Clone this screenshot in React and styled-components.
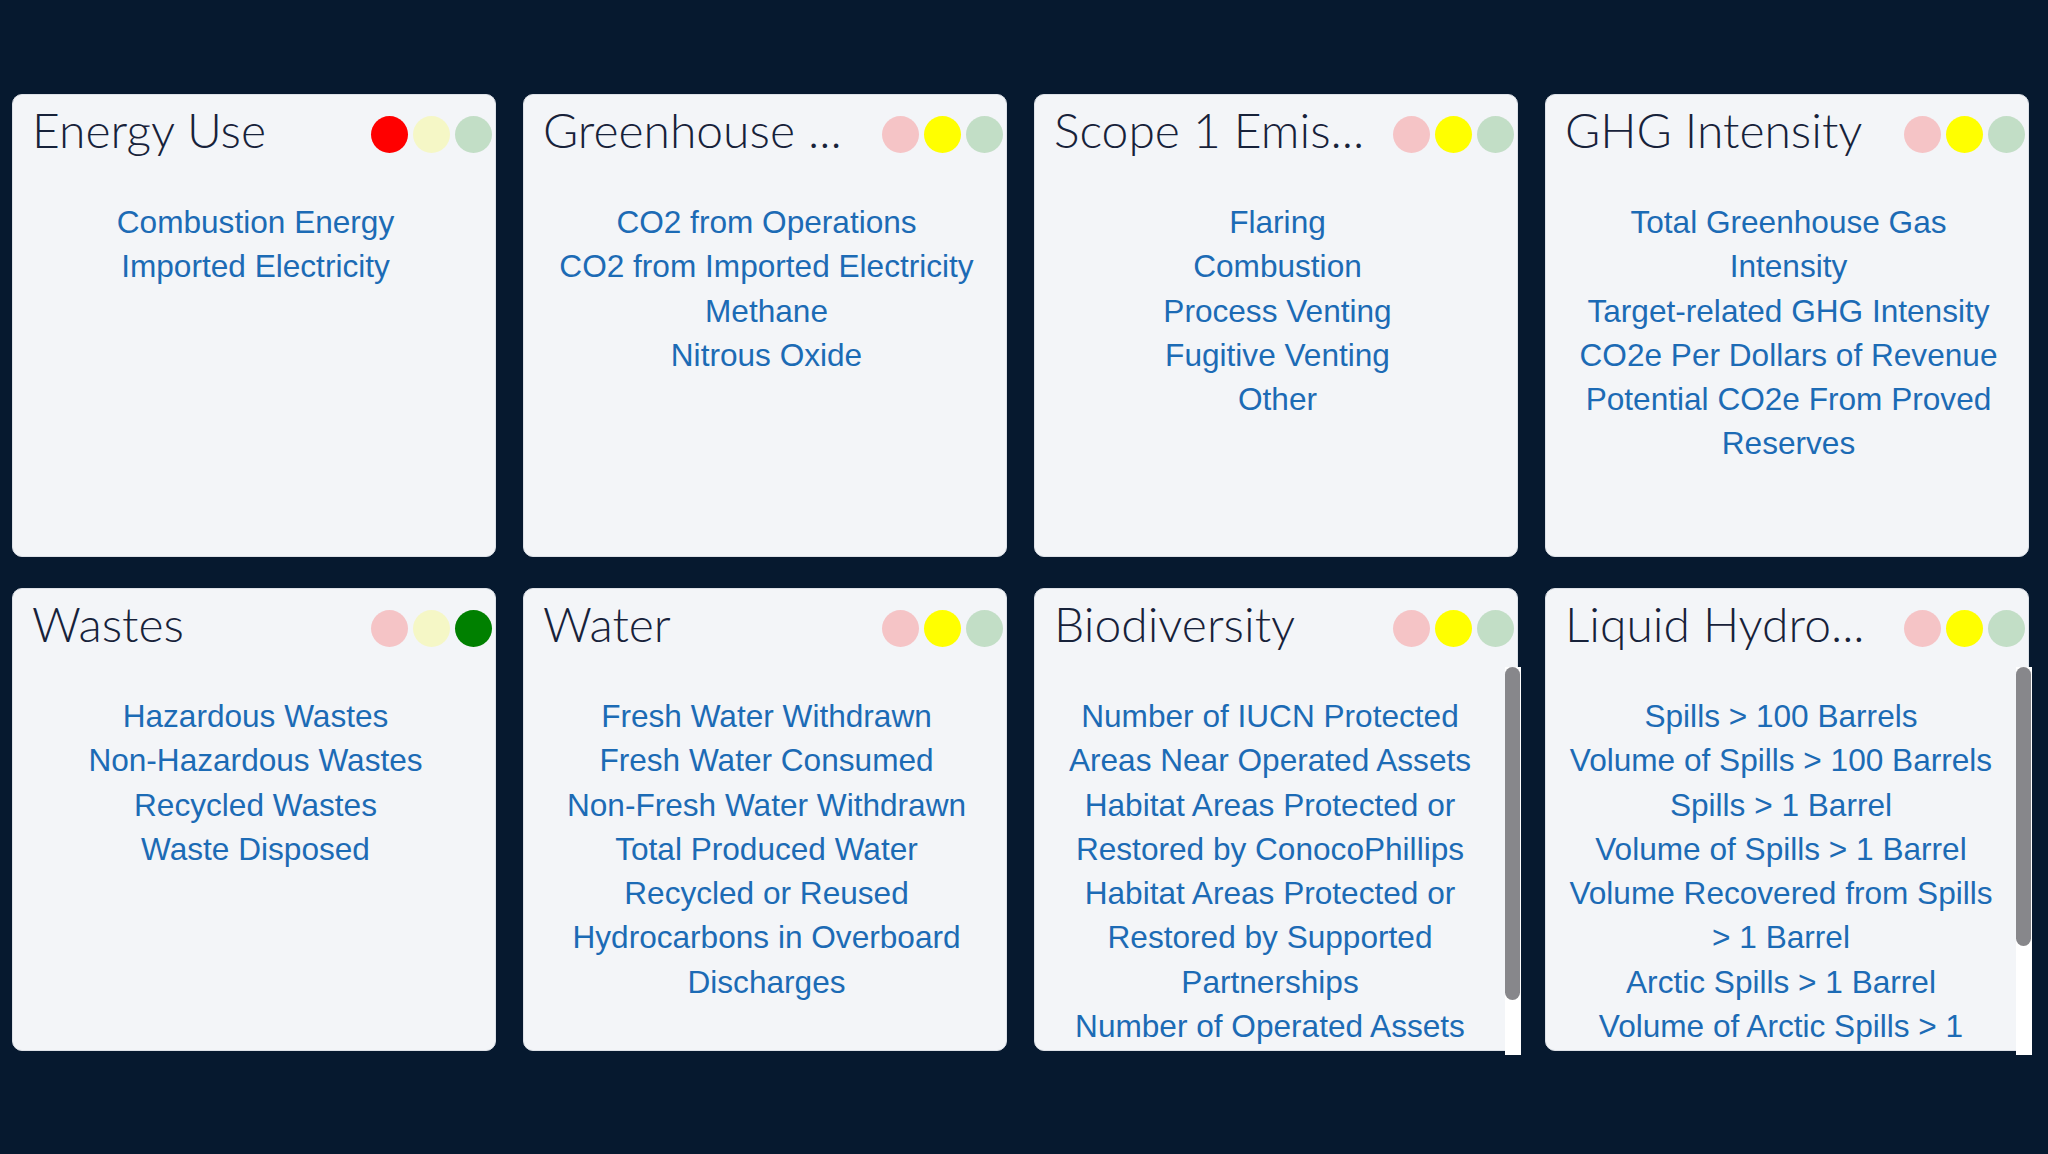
import React, { useLayoutEffect, useRef, useState } from 'react';
import styled, { createGlobalStyle } from 'styled-components';

const LIGHT = {
  red: '#ff0000',
  yellow: '#ffff00',
  green: '#008000',
};

const cards = [
  {
    title: 'Energy Use',
    status: 'red',
    items: ['Combustion Energy', 'Imported Electricity'],
  },
  {
    title: 'Greenhouse ...',
    status: 'yellow',
    items: [
      'CO2 from Operations',
      'CO2 from Imported Electricity',
      'Methane',
      'Nitrous Oxide',
    ],
  },
  {
    title: 'Scope 1 Emis...',
    status: 'yellow',
    items: ['Flaring', 'Combustion', 'Process Venting', 'Fugitive Venting', 'Other'],
  },
  {
    title: 'GHG Intensity',
    status: 'yellow',
    items: [
      'Total Greenhouse Gas Intensity',
      'Target-related GHG Intensity',
      'CO2e Per Dollars of Revenue',
      'Potential CO2e From Proved Reserves',
    ],
  },
  {
    title: 'Wastes',
    status: 'green',
    items: [
      'Hazardous Wastes',
      'Non-Hazardous Wastes',
      'Recycled Wastes',
      'Waste Disposed',
    ],
  },
  {
    title: 'Water',
    status: 'yellow',
    items: [
      'Fresh Water Withdrawn',
      'Fresh Water Consumed',
      'Non-Fresh Water Withdrawn',
      'Total Produced Water Recycled or Reused',
      'Hydrocarbons in Overboard Discharges',
    ],
  },
  {
    title: 'Biodiversity',
    status: 'yellow',
    items: [
      'Number of IUCN Protected Areas Near Operated Assets',
      'Habitat Areas Protected or Restored by ConocoPhillips',
      'Habitat Areas Protected or Restored by Supported Partnerships',
      'Number of Operated Assets Near IUCN Protected Areas',
    ],
  },
  {
    title: 'Liquid Hydro...',
    status: 'yellow',
    items: [
      'Spills > 100 Barrels',
      'Volume of Spills > 100 Barrels',
      'Spills > 1 Barrel',
      'Volume of Spills > 1 Barrel',
      'Volume Recovered from Spills > 1 Barrel',
      'Arctic Spills > 1 Barrel',
      'Volume of Arctic Spills > 1 Barrel',
      'Volume Recovered from Arctic Spills > 1 Barrel',
    ],
  },
];

function StatusLights({ status }) {
  return (
    <Lights>
      {Object.keys(LIGHT).map((key) => (
        <Light key={key} $color={LIGHT[key]} $on={status === key} />
      ))}
    </Lights>
  );
}

// list area; draws its own scrollbar when the links don't fit
function ScrollArea({ children }) {
  const ref = useRef(null);
  const [thumb, setThumb] = useState(0);

  useLayoutEffect(() => {
    const el = ref.current;
    if (el.scrollHeight > el.clientHeight + 1) {
      setThumb((el.clientHeight * el.clientHeight) / el.scrollHeight);
    }
  }, [thumb]);

  const hasBar = thumb > 0;

  return (
    <BodyWrap $bar={hasBar}>
      <Body ref={ref} $bar={hasBar}>
        {children}
      </Body>
      {hasBar && (
        <Track>
          <Thumb style={{ height: thumb }} />
        </Track>
      )}
    </BodyWrap>
  );
}

function MetricCard({ card }) {
  return (
    <Card>
      <Header>
        <Title>{card.title}</Title>
        <StatusLights status={card.status} />
      </Header>
      <ScrollArea>
        {card.items.map((item) => (
          <MetricLink key={item} href="#">
            {item}
          </MetricLink>
        ))}
      </ScrollArea>
    </Card>
  );
}

export default function App() {
  return (
    <>
      <GlobalStyle />
      <Page>
        <Grid>
          {cards.map((card) => (
            <MetricCard key={card.title} card={card} />
          ))}
        </Grid>
      </Page>
    </>
  );
}

const GlobalStyle = createGlobalStyle`
  html, body {
    margin: 0;
    padding: 0;
    background: #06192f;
  }
  * {
    box-sizing: border-box;
  }
`;

const Page = styled.main`
  min-height: 1154px;
  padding: 94px 0 0 12px;
  background: #06192f;
`;

const Grid = styled.div`
  display: grid;
  grid-template-columns: repeat(4, 484px);
  grid-auto-rows: 463px;
  column-gap: 27px;
  row-gap: 31px;
`;

const Card = styled.section`
  display: flex;
  flex-direction: column;
  height: 463px;
  background: #f3f5f8;
  border: 1px solid #dde1e7;
  border-radius: 10px;
`;

const Header = styled.div`
  display: flex;
  justify-content: space-between;
  align-items: flex-start;
  height: 78px;
  flex: none;
  padding: 6px 3px 0 19px;
`;

const Title = styled.h2`
  margin: 0;
  font-family: Lato, 'Open Sans', sans-serif;
  font-weight: 300;
  font-size: 48px;
  line-height: 58px;
  color: #17223a;
  white-space: nowrap;
  overflow: hidden;
`;

const Lights = styled.div`
  display: flex;
  gap: 5px;
  margin-top: 15px;
  flex: none;
`;

const Light = styled.span`
  width: 37px;
  height: 37px;
  border-radius: 50%;
  background: ${(p) => p.$color};
  opacity: ${(p) => (p.$on ? 1 : 0.2)};
`;

const BodyWrap = styled.div`
  position: relative;
  flex: none;
  height: 388px;
  margin-right: ${(p) => (p.$bar ? '-4px' : '0')};
`;

const Body = styled.div`
  display: flex;
  flex-direction: column;
  align-items: center;
  height: 100%;
  padding: ${(p) => (p.$bar ? '27px 36px 26px 20px' : '27px 24px 26px 27px')};
  overflow: hidden;
  text-align: center;
`;

const Track = styled.div`
  position: absolute;
  top: 0;
  right: 0;
  bottom: 0;
  width: 16px;
  background: #ffffff;
`;

const Thumb = styled.div`
  width: 15px;
  background: #87878b;
  border-radius: 8px;
`;

const MetricLink = styled.a`
  display: block;
  font-family: 'Liberation Sans', Arial, sans-serif;
  font-size: 31.6px;
  line-height: 44.3px;
  color: #1c6bb5;
  text-decoration: none;
`;
